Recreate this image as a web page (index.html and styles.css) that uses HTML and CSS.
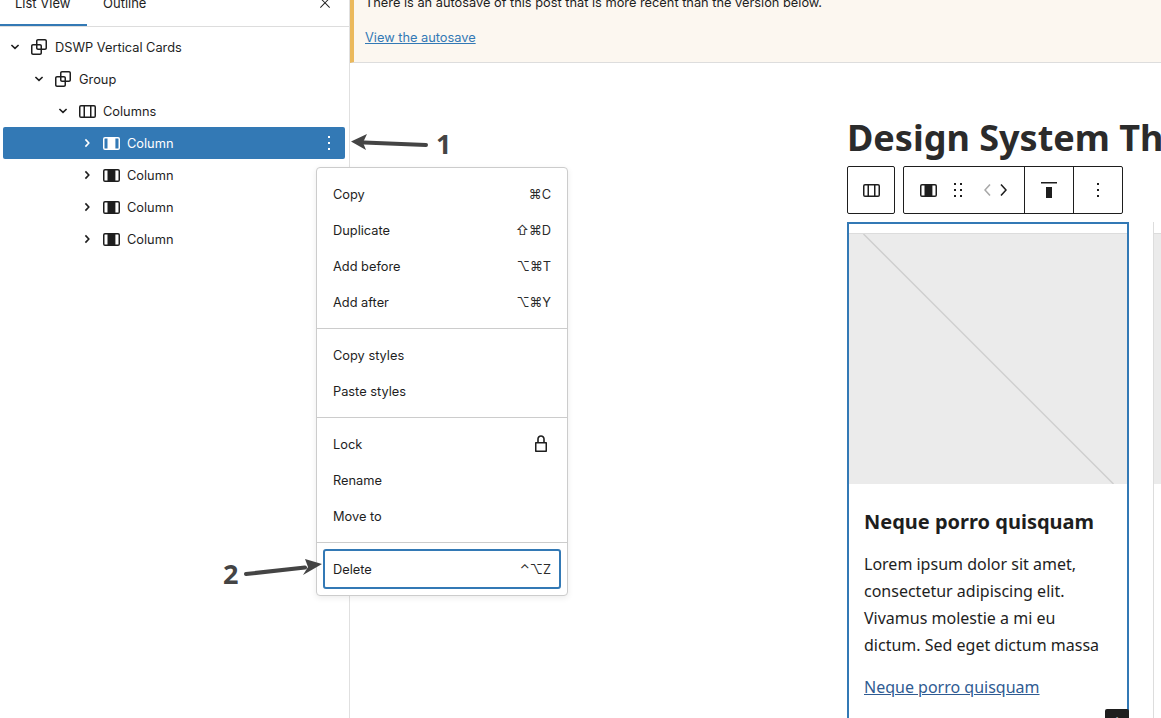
FILE: index.html
```html
<!DOCTYPE html>
<html lang="en">
<head>
    <meta charset="UTF-8">
    <meta name="viewport" content="width=device-width, initial-scale=1.0">
    <title>Edit Post</title>
    <link rel="stylesheet" href="styles.css">
</head>
<body>
    <svg class="icon-defs" width="0" height="0" aria-hidden="true">
        <symbol id="i-group" viewBox="0 0 24 24"><path d="M18 4h-7c-1.1 0-2 .9-2 2v3H6c-1.1 0-2 .9-2 2v7c0 1.1.9 2 2 2h7c1.1 0 2-.9 2-2v-3h3c1.1 0 2-.9 2-2V6c0-1.1-.9-2-2-2zm-4.500 14c0 .3-.2.5-.5.5H6c-.3 0-.5-.2-.5-.5v-7c0-.3.2-.5.5-.5h3V13c0 1.100.9 2 2 2h2.500v3zm0-4.500H11c-.3 0-.5-.2-.5-.5v-2.500H13c.3 0 .5.2.5.5v2.500zm5-.5c0 .3-.2.5-.5.5h-3V11c0-1.100-.9-2-2-2h-2.500V6c0-.3.2-.5.5-.5h7c.3 0 .5.2.5.5v7z"/></symbol>
        <symbol id="i-columns" viewBox="0 0 24 24"><path fill-rule="evenodd" d="M6 6h13a2 2 0 0 1 2 2v9a2 2 0 0 1-2 2H6a2 2 0 0 1-2-2V8a2 2 0 0 1 2-2Zm9 1.500h-5v10h5v-10Zm1.500 0v10H19a.5.5 0 0 0 .5-.5V8a.5.5 0 0 0-.5-.5h-2.500ZM6 7.500h2.500v10H6a.5.5 0 0 1-.5-.5V8a.5.5 0 0 1 .5-.5Z"/></symbol>
        <symbol id="i-column" viewBox="0 0 24 24"><path fill-rule="evenodd" d="M6 6h13a2 2 0 0 1 2 2v9a2 2 0 0 1-2 2H6a2 2 0 0 1-2-2V8a2 2 0 0 1 2-2Zm0 1.500a.5.5 0 0 0-.5.5v9a.5.5 0 0 0 .5.5h2.500v-10H6Zm10.400 0v10H19a.5.5 0 0 0 .5-.5V8a.5.5 0 0 0-.5-.5h-2.600Z"/></symbol>
        <symbol id="i-more" viewBox="0 0 24 24"><path d="M13 19h-2v-2h2v2zm0-6h-2v-2h2v2zm0-6h-2V5h2v2z"/></symbol>
        <symbol id="i-down" viewBox="0 0 16 16"><path d="M4.400 6 8 9.400 11.600 6" fill="none" stroke="currentColor" stroke-width="1.600"/></symbol>
        <symbol id="i-right" viewBox="0 0 16 16"><path d="M6.400 4.400 9.800 8 6.400 11.600" fill="none" stroke="currentColor" stroke-width="1.600"/></symbol>
    </svg>

    <aside class="sidebar">
        <div class="tabs">
            <div class="tab tab-active">List View</div>
            <div class="tab tab-next">Outline</div>
            <svg class="tabs-close" viewBox="0 0 24 24" width="16" height="16"><path d="M13 11.800l6.100-6.300-1-1-6.100 6.200-6.100-6.200-1 1 6.100 6.300-6.500 6.700 1 1 6.500-6.600 6.500 6.600 1-1z"/></svg>
        </div>
        <div class="tree">
            <div class="tree-row">
                <svg class="chevron"><use href="#i-down"/></svg>
                <svg class="block-icon"><use href="#i-group"/></svg>
                <span class="tree-label">DSWP Vertical Cards</span>
            </div>
            <div class="tree-row level-1">
                <svg class="chevron"><use href="#i-down"/></svg>
                <svg class="block-icon"><use href="#i-group"/></svg>
                <span class="tree-label">Group</span>
            </div>
            <div class="tree-row level-2">
                <svg class="chevron"><use href="#i-down"/></svg>
                <svg class="block-icon"><use href="#i-columns"/></svg>
                <span class="tree-label">Columns</span>
            </div>
            <div class="tree-row level-3 tree-row-selected">
                <svg class="chevron"><use href="#i-right"/></svg>
                <svg class="block-icon"><use href="#i-column"/></svg>
                <span class="tree-label">Column</span>
                <svg class="block-icon tree-more"><use href="#i-more"/></svg>
            </div>
            <div class="tree-row level-3">
                <svg class="chevron"><use href="#i-right"/></svg>
                <svg class="block-icon"><use href="#i-column"/></svg>
                <span class="tree-label">Column</span>
            </div>
            <div class="tree-row level-3">
                <svg class="chevron"><use href="#i-right"/></svg>
                <svg class="block-icon"><use href="#i-column"/></svg>
                <span class="tree-label">Column</span>
            </div>
            <div class="tree-row level-3">
                <svg class="chevron"><use href="#i-right"/></svg>
                <svg class="block-icon"><use href="#i-column"/></svg>
                <span class="tree-label">Column</span>
            </div>
        </div>
    </aside>

    <main class="editor">
        <div class="notice">
            <p>There is an autosave of this post that is more recent than the version below.</p>
            <a href="#" class="notice-link">View the autosave</a>
        </div>

        <div class="canvas">
            <h1 class="post-title">Design System Theme</h1>

            <div class="block-toolbar">
                <div class="toolbar-group toolbar-parent">
                    <svg class="block-icon"><use href="#i-columns"/></svg>
                </div>
                <div class="toolbar-group">
                    <div class="toolbar-section toolbar-block">
                        <svg class="block-icon"><use href="#i-column"/></svg>
                        <svg class="block-icon" viewBox="0 0 24 24"><path d="M8 7h2V5H8v2zm0 6h2v-2H8v2zm0 6h2v-2H8v2zm6-14v2h2V5h-2zm0 8h2v-2h-2v2zm0 6h2v-2h-2v2z"/></svg>
                        <div class="mover">
                            <svg class="block-icon mover-disabled" viewBox="0 0 24 24"><path d="M14.600 7l-1.200-1L8 12l5.400 6 1.200-1-4.600-5z"/></svg>
                            <svg class="block-icon" viewBox="0 0 24 24"><path d="M10.600 6L9.400 7l4.600 5-4.600 5 1.200 1 5.400-6z"/></svg>
                        </div>
                    </div>
                    <div class="toolbar-section toolbar-align">
                        <svg class="block-icon" viewBox="0 0 24 24"><path d="M9 20h6V9H9v11zM4 4v1.500h16V4H4z"/></svg>
                    </div>
                    <div class="toolbar-section toolbar-more">
                        <svg class="block-icon"><use href="#i-more"/></svg>
                    </div>
                </div>
            </div>

            <div class="cards">
                <article class="card card-selected">
                    <div class="placeholder">
                        <svg class="placeholder-line" viewBox="0 0 278 251"><line x1="14" y1="0" x2="265" y2="251"/></svg>
                    </div>
                    <div class="card-body">
                        <h3>Neque porro quisquam</h3>
                        <p>Lorem ipsum dolor sit amet, consectetur adipiscing elit. Vivamus molestie a mi eu dictum. Sed eget dictum massa</p>
                        <a href="#">Neque porro quisquam</a>
                    </div>
                    <div class="inserter">+</div>
                </article>
                <article class="card card-next">
                    <div class="placeholder"></div>
                </article>
            </div>
        </div>
    </main>

    <div class="block-menu">
        <div class="menu-group">
            <div class="menu-item"><span>Copy</span><span class="shortcut">⌘C</span></div>
            <div class="menu-item"><span>Duplicate</span><span class="shortcut">⇧⌘D</span></div>
            <div class="menu-item"><span>Add before</span><span class="shortcut">⌥⌘T</span></div>
            <div class="menu-item"><span>Add after</span><span class="shortcut">⌥⌘Y</span></div>
        </div>
        <div class="menu-group">
            <div class="menu-item"><span>Copy styles</span></div>
            <div class="menu-item"><span>Paste styles</span></div>
        </div>
        <div class="menu-group">
            <div class="menu-item">
                <span>Lock</span>
                <svg class="block-icon lock-icon" viewBox="0 0 24 24"><path d="M17 10h-1.200V7c0-2.100-1.700-3.800-3.800-3.800-2.100 0-3.800 1.700-3.800 3.800v3H7c-.6 0-1 .4-1 1v8c0 .6.4 1 1 1h10c.6 0 1-.4 1-1v-8c0-.6-.4-1-1-1zM9.800 7c0-1.200 1-2.200 2.200-2.200 1.200 0 2.200 1 2.200 2.200v3H9.800V7zm6.700 11.500h-9v-7h9v7z"/></svg>
            </div>
            <div class="menu-item"><span>Rename</span></div>
            <div class="menu-item"><span>Move to</span></div>
        </div>
        <div class="menu-group menu-group-last">
            <div class="menu-item menu-item-focus"><span>Delete</span><span class="shortcut">⌃⌥Z</span></div>
        </div>
    </div>

    <!-- annotations drawn over the screenshot -->
    <svg class="arrow arrow-one" viewBox="0 0 80 20" width="80" height="20">
        <path d="M76 11 14 8.500" stroke="#444" stroke-width="4" stroke-linecap="round" fill="none"/>
        <path d="M1 7.500 17 0 13 8.500 16 16Z" fill="#444"/>
    </svg>
    <span class="arrow-num num-one">1</span>
    <svg class="arrow arrow-two" viewBox="0 0 80 20" width="80" height="20">
        <path d="M3 15 62 8.500" stroke="#444" stroke-width="4" stroke-linecap="round" fill="none"/>
        <path d="M79 5 62 0 65 8 60 16Z" fill="#444"/>
    </svg>
    <span class="arrow-num num-two">2</span>
</body>
</html>
```

FILE: styles.css
```css
* {
    box-sizing: border-box;
    margin: 0;
    padding: 0;
}

html, body {
    height: 718px;
    overflow: hidden;
}

body {
    position: relative;
    display: flex;
    background: #fff;
    color: #1e1e1e;
    font-family: 'Inter', 'Liberation Sans', sans-serif;
    font-size: 12.8px;
}

.icon-defs {
    position: absolute;
}

svg {
    fill: currentColor;
    flex-shrink: 0;
}

.block-icon {
    width: 24px;
    height: 24px;
}

/* Sidebar */
.sidebar {
    width: 350px;
    flex-shrink: 0;
    border-right: 1px solid #e0e0e0;
}

.tabs {
    position: relative;
    display: flex;
    height: 27px;
    border-bottom: 1px solid #ddd;
    overflow: hidden;
    align-items: flex-end;
    font-size: 13px;
}

.tab {
    height: 26px;
    padding: 0 15px 15px;
    line-height: 16px;
    display: flex;
    align-items: flex-end;
}

.tab-active {
    width: 87px;
    box-shadow: inset 0 -2px 0 #3379b5;
}

.tab-next {
    margin-left: 1px;
}

.tabs-close {
    position: absolute;
    right: 16px;
    top: -5px;
}

.tree {
    padding-top: 4px;
}

.tree-row {
    display: flex;
    align-items: center;
    height: 32px;
    margin: 0 4px 0 3px;
    padding-left: 4px;
    border-radius: 2px;
}

.level-1 { padding-left: 28px; }
.level-2 { padding-left: 52px; }
.level-3 { padding-left: 76px; }

.tree-row-selected {
    background: #3379b5;
    color: #fff;
}

.chevron {
    width: 16px;
    height: 16px;
}

.tree-row .block-icon {
    margin-left: 4px;
}

.tree-label {
    margin-left: 4px;
}

.tree-row .tree-more {
    margin-left: auto;
    margin-right: 4px;
}

/* Main area */
.editor {
    flex: 1;
    min-width: 0;
    overflow: hidden;
}

.notice {
    display: flow-root;
    height: 63px;
    padding-left: 11px;
    background: #fcf7f0;
    border-left: 4px solid #ebb95c;
    border-bottom: 1px solid #ddd;
    line-height: 20px;
}

.notice p {
    margin-top: -7px;
    margin-bottom: 15px;
}

.notice-link {
    color: #3379b5;
}

.canvas {
    padding: 50px 0 0 497px;
}

.post-title {
    font-family: 'Noto Sans', sans-serif;
    font-size: 36px;
    line-height: 50px;
    font-weight: 700;
    color: #2b2b2b;
    white-space: nowrap;
}

.block-toolbar {
    display: flex;
    gap: 8px;
    height: 48px;
    margin-top: 3px;
}

.toolbar-group {
    display: flex;
    border: 1px solid #1e1e1e;
    border-radius: 2px;
    background: #fff;
}

.toolbar-parent {
    width: 48px;
    align-items: center;
    justify-content: center;
}

.toolbar-section {
    display: flex;
    align-items: center;
    justify-content: center;
    border-right: 1px solid #1e1e1e;
}

.toolbar-block {
    width: 121px;
    justify-content: flex-start;
    padding-left: 12px;
    gap: 6px;
}

.toolbar-align {
    width: 49px;
}

.toolbar-more {
    width: 48px;
    border-right: 0;
}

.mover {
    display: flex;
    margin-left: 4.5px;
}

.mover .block-icon {
    margin: 0 -4.5px;
}

.mover-disabled {
    color: #a8a8a8;
}

.cards {
    display: flex;
    gap: 24px;
    margin-top: 8px;
}

.card {
    flex-shrink: 0;
    position: relative;
    width: 282px;
    height: 520px;
    padding-top: 11px;
}

.card-selected {
    border: 2px solid #3379b5;
    padding-top: 9px;
}

.card-next {
    border-left: 1px solid #ddd;
}

.placeholder {
    height: 251px;
    background: #ebebeb;
    border-top: 1px solid #dcdcdc;
}

.placeholder-line {
    display: block;
    width: 100%;
    height: 100%;
    stroke: #cfcfcf;
    stroke-width: 1.5;
}

.card-body {
    padding: 24px 15px 0;
    font-family: 'Noto Sans', sans-serif;
    font-size: 16px;
    line-height: 27px;
    color: #1e1e1e;
}

.card-body h3 {
    font-size: 20px;
    line-height: 27px;
    font-weight: 700;
    margin-bottom: 16px;
}

.card-body p {
    margin-bottom: 15px;
}

.card-body a {
    color: #2f5b92;
}

.inserter {
    position: absolute;
    top: 485px;
    right: -2px;
    width: 24px;
    height: 24px;
    background: #1e1e1e;
    color: #fff;
    text-align: center;
    line-height: 24px;
    font-size: 20px;
    border-radius: 2px;
}

/* Block settings menu */
.block-menu {
    position: absolute;
    left: 316px;
    top: 167px;
    width: 252px;
    background: #fff;
    border: 1px solid #ccc;
    border-radius: 4px;
    box-shadow: 0 2px 6px rgba(0,0,0,0.08);
}

.menu-group {
    padding: 8px 6px;
    border-bottom: 1px solid #ccc;
}

.menu-group-last {
    padding: 6px;
    border-bottom: 0;
}

.menu-item {
    display: flex;
    align-items: center;
    justify-content: space-between;
    height: 36px;
    padding: 0 10px;
}

.menu-item-focus {
    height: 40px;
    padding: 0 8px;
    border: 2px solid #3379b5;
    border-radius: 3px;
}

.shortcut {
    font-family: 'Inter', 'DejaVu Sans', sans-serif;
    font-size: 12.8px;
    color: #2b2b2b;
}

.lock-icon {
    margin-right: -2px;
}

/* Annotations */
.arrow {
    position: absolute;
}

.arrow-one {
    left: 350px;
    top: 134px;
}

.arrow-two {
    left: 243px;
    top: 559px;
}

.arrow-num {
    position: absolute;
    font-family: 'Open Sans', sans-serif;
    font-weight: 700;
    font-size: 27px;
    line-height: 30px;
    color: #444;
}

.num-one {
    left: 436px;
    top: 129px;
}

.num-two {
    left: 223px;
    top: 559px;
}
```
